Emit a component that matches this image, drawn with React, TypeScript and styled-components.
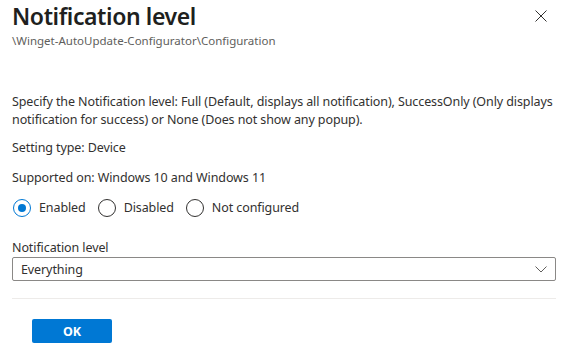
import * as React from "react";
import styled, { createGlobalStyle } from "styled-components";

const GlobalStyle = createGlobalStyle`
  html, body {
    margin: 0;
    padding: 0;
    background: #ffffff;
  }
  body {
    font-family: "Noto Sans", "Open Sans", sans-serif;
    color: #323130;
  }
`;

const Panel = styled.div`
  width: 566px;
  height: 350px;
  box-sizing: border-box;
  padding: 0 10px 0 12px;
  display: flex;
  flex-direction: column;
  overflow: hidden;
`;

const Header = styled.div`
  display: flex;
  align-items: flex-start;
  justify-content: space-between;
`;

const TitleBlock = styled.div`
  display: flex;
  flex-direction: column;
`;

const Title = styled.h1`
  margin: 0;
  font-size: 23px;
  line-height: 32px;
  font-weight: 600;
  letter-spacing: -0.4px;
  color: #201f1e;
`;

const Subtitle = styled.div`
  font-size: 11.5px;
  line-height: 16px;
  color: #605e5c;
  margin-top: 1px;
`;

const CloseButton = styled.button`
  margin: 10px 9px 0 0;
  padding: 0;
  border: none;
  background: none;
  width: 12px;
  height: 12px;
  display: flex;
  cursor: pointer;
`;

const Text = styled.p<{ $top: number }>`
  margin: ${(p) => p.$top}px 0 0;
  font-size: 12.5px;
  line-height: 18px;
  letter-spacing: -0.1px;
  color: #323130;
`;

const RadioGroup = styled.div`
  display: flex;
  align-items: center;
  gap: 11px;
  margin-top: 11px;
  height: 20px;
`;

const RadioOption = styled.label`
  display: flex;
  align-items: center;
  gap: 8px;
  font-size: 12.5px;
  line-height: 18px;
  letter-spacing: -0.1px;
  cursor: pointer;
`;

const RadioCircle = styled.span<{ $checked?: boolean }>`
  width: 18px;
  height: 18px;
  box-sizing: border-box;
  border-radius: 50%;
  border: 1px solid ${(p) => (p.$checked ? "#0078d4" : "#323130")};
  display: flex;
  align-items: center;
  justify-content: center;
  margin-left: 1px;

  &::after {
    content: "";
    width: 8px;
    height: 8px;
    border-radius: 50%;
    background: ${(p) => (p.$checked ? "#0078d4" : "transparent")};
  }
`;

const FieldLabel = styled.div`
  margin-top: 21px;
  font-size: 12.5px;
  line-height: 18px;
  letter-spacing: -0.1px;
`;

const Select = styled.div`
  margin-top: 0;
  height: 24px;
  box-sizing: border-box;
  border: 1px solid #8a8886;
  border-radius: 2px;
  display: flex;
  align-items: center;
  justify-content: space-between;
  padding: 0 8px 0 8px;
  font-size: 12.5px;
  letter-spacing: -0.1px;
`;

const Divider = styled.div`
  margin-top: 17px;
  height: 1px;
  background: #edebe9;
`;

const Footer = styled.div`
  display: flex;
  padding: 20px 0 0 20px;
`;

const PrimaryButton = styled.button`
  width: 80px;
  height: 24px;
  border: none;
  border-radius: 2px;
  background: #0078d4;
  color: #ffffff;
  font-family: "Noto Sans", "Open Sans", sans-serif;
  font-size: 12.5px;
  font-weight: 700;
  cursor: pointer;
`;

const options = [
  { label: "Enabled", checked: true },
  { label: "Disabled" },
  { label: "Not configured" },
];

export default function App() {
  return (
    <>
      <GlobalStyle />
      <Panel>
        <Header>
          <TitleBlock>
            <Title>Notification level</Title>
            <Subtitle>\Winget-AutoUpdate-Configurator\Configuration</Subtitle>
          </TitleBlock>
          <CloseButton aria-label="Close">
            <svg width="12" height="12" viewBox="0 0 12 12">
              <path d="M0.5 0.5 L11.5 11.5 M11.5 0.5 L0.5 11.5" stroke="#323130" strokeWidth="1" fill="none" />
            </svg>
          </CloseButton>
        </Header>

        <Text $top={44}>
          Specify the Notification level: Full (Default, displays all notification), SuccessOnly (Only displays
          notification for success) or None (Does not show any popup).
        </Text>
        <Text $top={10}>Setting type: Device</Text>
        <Text $top={12}>Supported on: Windows 10 and Windows 11</Text>

        <RadioGroup>
          {options.map((o) => (
            <RadioOption key={o.label}>
              <RadioCircle $checked={o.checked} />
              {o.label}
            </RadioOption>
          ))}
        </RadioGroup>

        <FieldLabel>Notification level</FieldLabel>
        <Select>
          <span>Everything</span>
          <svg width="12" height="7" viewBox="0 0 12 7">
            <path d="M0.5 0.5 L6 6 L11.5 0.5" stroke="#605e5c" strokeWidth="1" fill="none" />
          </svg>
        </Select>
        <Divider />

        <Footer>
          <PrimaryButton>OK</PrimaryButton>
        </Footer>
      </Panel>
    </>
  );
}
